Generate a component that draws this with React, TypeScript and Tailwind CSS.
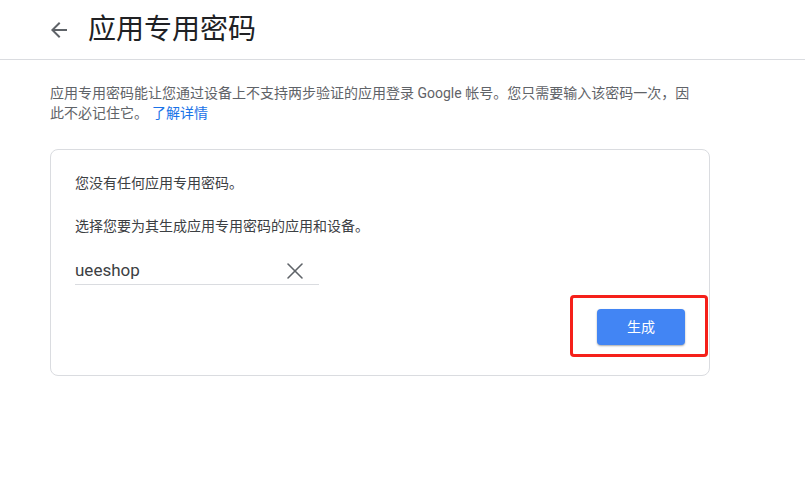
import { X } from "lucide-react";

const font = { fontFamily: "Roboto, 'Noto Sans CJK SC', sans-serif" };

const BackArrow = () => (
  <svg width="24" height="24" viewBox="0 0 24 24" fill="#5f6368">
    <path d="M20 11H7.83l5.59-5.59L12 4l-8 8 8 8 1.41-1.41L7.83 13H20v-2z" />
  </svg>
);

export default function App() {
  return (
    <main className="min-h-screen w-[805px] bg-white text-[#202124]" style={font}>
      <header className="flex h-[60px] items-center border-b border-[#dadce0] pl-[47px]">
        <button className="flex h-6 w-6 items-center justify-center">
          <BackArrow />
        </button>
        <h1 className="ml-[17px] text-[28px] leading-none text-[#202124]">应用专用密码</h1>
      </header>

      <section className="w-[652px] ml-[50px] pt-[23px]">
        <p className="text-[14px] leading-[20px] text-[#5f6368]">
          应用专用密码能让您通过设备上不支持两步验证的应用登录 Google 帐号。您只需要输入该密码一次，因此不必记住它。
          <a className="ml-1 text-[#1a73e8]">了解详情</a>
        </p>
      </section>

      <div className="ml-[50px] mt-[26px] w-[660px] rounded-lg border border-[#dadce0] px-[24px] pb-[30px] pt-[23px]">
        <p className="text-[14px] leading-[20px] text-[#3c4043]">您没有任何应用专用密码。</p>
        <p className="mt-[23px] text-[14px] leading-[20px] text-[#3c4043]">
          选择您要为其生成应用专用密码的应用和设备。
        </p>

        <div className="mt-[21px] flex h-[28px] w-[244px] items-center border-b border-[#dadce0]">
          <span className="flex-1 text-[17px] text-[#3c4043]">ueeshop</span>
          <X size={28} strokeWidth={1.3} className="mr-[10px] text-[#5f6368]" />
        </div>

        <div className="mt-[24px] flex justify-end">
          <div className="relative">
            <button className="h-[36px] w-[88px] rounded bg-[#4285f4] text-[14px] text-white shadow-[0_1px_2px_rgba(0,0,0,0.35)]">
              生成
            </button>
            <div className="absolute left-[-27px] top-[-14px] h-[62px] w-[138px] rounded-sm border-[3px] border-[#f5201a]" />
          </div>
        </div>
      </div>
    </main>
  );
}
